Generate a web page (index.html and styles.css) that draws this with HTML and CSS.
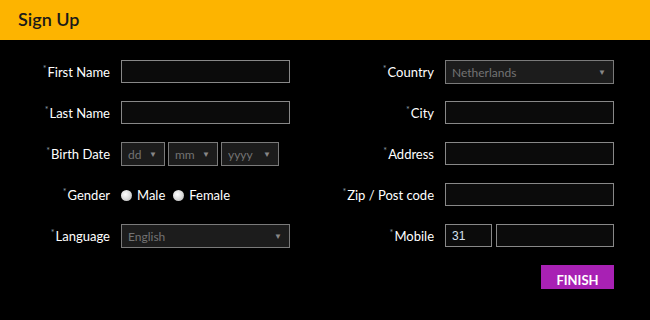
FILE: index.html
```html
<!DOCTYPE html>
<html>
<head>
  <meta charset="utf-8">
  <link rel="stylesheet" href="styles.css">
</head>
<body>
  <div class="header">
    <h1 class="title">Sign Up</h1>
  </div>

  <form class="signup">
    <div class="column column-left">
      <label class="field-label"><span class="req">*</span>First Name</label>
      <input class="text-input" type="text">

      <label class="field-label"><span class="req">*</span>Last Name</label>
      <input class="text-input" type="text">

      <label class="field-label"><span class="req">*</span>Birth Date</label>
      <div class="date-group">
        <span class="select-wrap date-dd"><select class="select-input"><option>dd</option></select></span>
        <span class="select-wrap date-mm"><select class="select-input"><option>mm</option></select></span>
        <span class="select-wrap date-yy"><select class="select-input"><option>yyyy</option></select></span>
      </div>

      <label class="field-label"><span class="req">*</span>Gender</label>
      <div class="radio-group">
        <label class="radio"><input type="radio" name="gender"> Male</label>
        <label class="radio"><input type="radio" name="gender"> Female</label>
      </div>

      <label class="field-label"><span class="req">*</span>Language</label>
      <span class="select-wrap"><select class="select-input"><option>English</option></select></span>
    </div>

    <div class="column column-right">
      <label class="field-label"><span class="req">*</span>Country</label>
      <span class="select-wrap"><select class="select-input"><option>Netherlands</option></select></span>

      <label class="field-label"><span class="req">*</span>City</label>
      <input class="text-input" type="text">

      <label class="field-label"><span class="req">*</span>Address</label>
      <input class="text-input" type="text">

      <label class="field-label"><span class="req">*</span>Zip / Post code</label>
      <input class="text-input" type="text">

      <label class="field-label"><span class="req">*</span>Mobile</label>
      <div class="mobile-group">
        <input class="text-input mobile-code" type="text" value="31">
        <input class="text-input mobile-number" type="text">
      </div>

      <div class="actions">
        <button class="finish-button" type="button">FINISH</button>
      </div>
    </div>
  </form>
</body>
</html>
```

FILE: styles.css
```css
body {
  margin: 0;
  background: #000;
  font-family: Lato, 'Open Sans', sans-serif;
  color: #fff;
}

.header {
  height: 40px;
  background: #fdb400;
  display: flex;
  align-items: center;
  padding-left: 18px;
}

.title {
  margin: 0 0 2px 0;
  font-size: 18px;
  font-weight: 600;
  color: #1a1a1a;
}

.signup {
  display: flex;
  padding-top: 20px;
}

.column {
  display: grid;
  grid-template-columns: auto 169px;
  grid-auto-rows: 24px;
  column-gap: 11px;
  row-gap: 17px;
}

.column-left {
  grid-template-columns: 110px 169px;
}

.column-right {
  margin-left: 10px;
  grid-template-columns: 134px 169px;
}

.field-label {
  display: flex;
  align-items: center;
  justify-content: flex-end;
  font-size: 13px;
  color: #fff;
  height: 23px;
}

.req {
  font-size: 9px;
  color: #8a9aa0;
  align-self: flex-start;
  margin-top: 3px;
  margin-right: 1px;
}

.text-input {
  box-sizing: border-box;
  width: 169px;
  height: 23px;
  margin: 0;
  padding: 0 8px;
  background: #0b0b0b;
  border: 1px solid #888;
  color: #d6e2f0;
  font-family: 'Liberation Sans', Arial, sans-serif;
  font-size: 12px;
  outline: none;
}

.select-wrap {
  position: relative;
  display: block;
  width: 169px;
  height: 24px;
}

.select-wrap::after {
  content: "\25BC";
  position: absolute;
  right: 8px;
  top: 7px;
  font-size: 8px;
  color: #888;
  pointer-events: none;
}

.select-input {
  appearance: none;
  -webkit-appearance: none;
  box-sizing: border-box;
  width: 100%;
  height: 24px;
  margin: 0;
  padding: 0 6px;
  background: #1c1c1c;
  border: 1px solid #7a7a7a;
  border-radius: 0;
  color: #737373;
  font-family: Lato, sans-serif;
  font-size: 12px;
  outline: none;
}

.date-group {
  display: flex;
  gap: 3px;
}

.date-dd { width: 44px; }
.date-mm { width: 50px; }
.date-yy { width: 58px; }

.radio-group {
  display: flex;
  align-items: center;
  gap: 8px;
  height: 24px;
}

.radio {
  display: flex;
  align-items: center;
  font-size: 13px;
  color: #fff;
}

.radio input {
  appearance: none;
  -webkit-appearance: none;
  width: 11px;
  height: 11px;
  margin: 0 5px 0 0;
  border-radius: 50%;
  background: radial-gradient(circle at 40% 40%, #fff 0, #ddd 50%, #aaa 100%);
}

.mobile-group {
  display: flex;
  gap: 4px;
}

.mobile-code {
  width: 47px;
  padding: 0 6px;
}

.mobile-number {
  width: 118px;
}

.actions {
  grid-column: 1 / 3;
  display: flex;
  justify-content: flex-end;
  height: 31px;
}

.finish-button {
  width: 73px;
  height: 31px;
  padding: 0;
  border: none;
  background: #a821b4;
  color: #fff;
  font-family: Lato, sans-serif;
  font-size: 13px;
  font-weight: bold;
  line-height: 31px;
  cursor: pointer;
}
```
